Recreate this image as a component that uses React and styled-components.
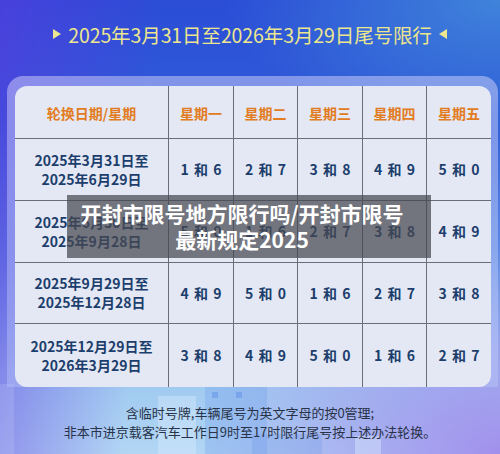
import React from "react";
import styled, { createGlobalStyle } from "styled-components";

const GlobalStyle = createGlobalStyle`
  html, body {
    margin: 0;
    padding: 0;
  }
  body {
    font-family: "Noto Sans CJK SC", "Noto Sans", sans-serif;
  }
`;

const font = `"Noto Sans CJK SC", "Noto Sans", sans-serif`;

const Page = styled.div`
  position: relative;
  width: 500px;
  height: 454px;
  overflow: hidden;
  display: flex;
  flex-direction: column;
  background:
    radial-gradient(ellipse 60% 45% at 100% 100%, rgba(160, 140, 236, 0.95), rgba(160, 140, 236, 0) 100%),
    radial-gradient(ellipse 55% 30% at 100% 0%, rgba(70, 150, 220, 0.75), rgba(70, 150, 220, 0) 100%),
    linear-gradient(95deg, rgba(95, 55, 225, 0.55) 0%, rgba(95, 55, 225, 0) 30%),
    linear-gradient(180deg, #2b4dd6 0%, #2f5bd8 25%, #5b88e3 55%, #9ec8f0 82%, #b2d6f4 100%);
`;

const City = styled.svg`
  position: absolute;
  left: 0;
  bottom: 0;
  width: 500px;
  height: 70px;
`;

const Title = styled.h1`
  margin: 0;
  height: 68px;
  display: flex;
  align-items: center;
  justify-content: center;
  gap: 7px;
  font-family: ${font};
  font-size: 19.5px;
  font-weight: 400;
  color: #ece68e;
  letter-spacing: -0.1px;
`;

const Arrow = styled.span`
  width: 0;
  height: 0;
  border-top: 5px solid transparent;
  border-bottom: 5px solid transparent;
  ${(p) =>
    p.$dir === "right"
      ? "border-left: 8px solid #ece68e;"
      : "border-right: 8px solid #ece68e;"}
`;

const Frame = styled.div`
  position: relative;
  margin: 8px 2px 0 7px;
  padding: 10px 7px 0 8px;
  border-radius: 16px 16px 0 0;
  background: linear-gradient(180deg, rgba(230, 225, 255, 0.45), rgba(200, 215, 255, 0.3));
`;

const Table = styled.div`
  display: grid;
  grid-template-columns: 154px 65px 64px 65px 64px 64px;
  grid-template-rows: 53px 62px 62px 61px 63px;
  background: #e4e8f4;
  border-radius: 12px;
  overflow: hidden;
`;

const Cell = styled.div`
  display: flex;
  align-items: center;
  justify-content: center;
  text-align: center;
  font-family: ${font};
  font-weight: 700;
  font-size: 14px;
  line-height: 19px;
  color: ${(p) => (p.$head ? "#e27c22" : "#1c3e6c")};
  border-right: ${(p) => (p.$lastCol ? "none" : "1px solid #6a6e78")};
  border-bottom: ${(p) => (p.$lastRow ? "none" : "1px solid #6a6e78")};
  padding-top: ${(p) => (p.$head ? "2px" : "0")};
`;

const Pair = styled.span`
  word-spacing: 2px;
`;

const Footer = styled.div`
  position: relative;
  padding-top: 16px;
  text-align: center;
  font-family: ${font};
  font-size: 13px;
  line-height: 19px;
  color: #283248;
`;

const Overlay = styled.div`
  position: absolute;
  left: 67px;
  top: 195px;
  width: 364px;
  height: 63px;
  box-sizing: border-box;
  padding-top: 5px;
  background: rgba(70, 72, 80, 0.72);
  color: #ffffff;
  font-family: ${font};
  font-weight: 700;
  font-size: 21px;
  line-height: 26px;
  text-align: center;
  padding-right: 14px;
`;

const heads = ["轮换日期/星期", "星期一", "星期二", "星期三", "星期四", "星期五"];

const rows = [
  ["2025年3月31日至", "2025年6月29日", ["1 和 6", "2 和 7", "3 和 8", "4 和 9", "5 和 0"]],
  ["2025年6月30日至", "2025年9月28日", ["5 和 0", "1 和 6", "2 和 7", "3 和 8", "4 和 9"]],
  ["2025年9月29日至", "2025年12月28日", ["4 和 9", "5 和 0", "1 和 6", "2 和 7", "3 和 8"]],
  ["2025年12月29日至", "2026年3月29日", ["3 和 8", "4 和 9", "5 和 0", "1 和 6", "2 和 7"]],
];

export default function App() {
  return (
    <>
      <GlobalStyle />
      <Page>
        <City viewBox="0 0 500 70">
          <rect x="158" y="12" width="38" height="58" fill="rgba(225,240,255,0.35)" />
          <rect x="205" y="0" width="62" height="70" fill="rgba(90,140,230,0.22)" />
          <rect x="212" y="8" width="6" height="6" fill="rgba(90,140,230,0.45)" />
          <rect x="236" y="8" width="6" height="6" fill="rgba(90,140,230,0.45)" />
          <rect x="252" y="50" width="70" height="20" fill="rgba(90,140,230,0.2)" />
          <rect x="355" y="52" width="26" height="18" fill="rgba(225,240,255,0.4)" />
          <rect x="0" y="0" width="14" height="70" fill="rgba(225,240,255,0.15)" />
        </City>
        <Title>
          <Arrow $dir="right" />
          2025年3月31日至2026年3月29日尾号限行
          <Arrow $dir="left" />
        </Title>
        <Frame>
          <Table>
            {heads.map((h, i) => (
              <Cell key={h} $head $lastCol={i === 5}>
                {h}
              </Cell>
            ))}
            {rows.map(([a, b, pairs], r) => (
              <React.Fragment key={a}>
                <Cell $lastRow={r === 3}>
                  {a}
                  <br />
                  {b}
                </Cell>
                {pairs.map((p, i) => (
                  <Cell key={i} $lastRow={r === 3} $lastCol={i === 4}>
                    <Pair>{p}</Pair>
                  </Cell>
                ))}
              </React.Fragment>
            ))}
          </Table>
        </Frame>
        <Footer>
          含临时号牌,车辆尾号为英文字母的按0管理;
          <br />
          非本市进京载客汽车工作日9时至17时限行尾号按上述办法轮换。
        </Footer>
        <Overlay>
          开封市限号地方限行吗/开封市限号
          <br />
          最新规定2025
        </Overlay>
      </Page>
    </>
  );
}
